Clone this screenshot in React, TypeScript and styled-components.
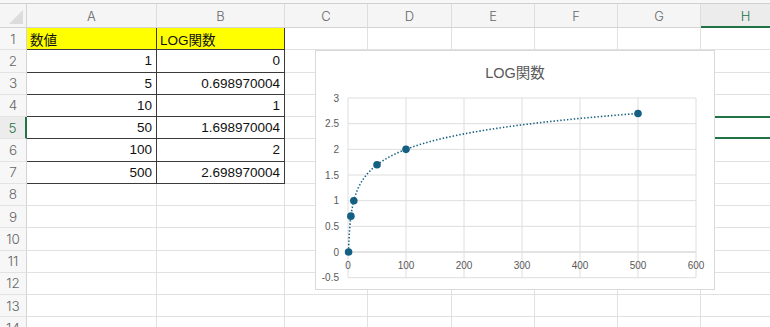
import { createGlobalStyle, styled } from "styled-components";

const GlobalStyle = createGlobalStyle`
  html, body {
    margin: 0;
    padding: 0;
    background: #ffffff;
  }
  body {
    font-family: "Liberation Sans", "Noto Sans CJK JP", sans-serif;
  }
`;

const Sheet = styled.div`
  position: relative;
  width: 770px;
  height: 327px;
  overflow: hidden;
  background: #ffffff;
`;

const TopStrip = styled.div`
  height: 3px;
  border-bottom: 1px solid #d0d0d0;
  background: #f7f7f7;
`;

const Grid = styled.div`
  display: grid;
  grid-template-columns: 27px 130px 128px 83px 84px 83px 83px 83px 90px;
  grid-template-rows: 24px repeat(14, 22.25px);
`;

const Corner = styled.div`
  position: relative;
  background: #f5f5f5;
  border-right: 1px solid #d4d4d4;
  border-bottom: 1px solid #d4d4d4;
  box-sizing: border-box;
  &::after {
    content: "";
    position: absolute;
    right: 3px;
    bottom: 3px;
    border-style: solid;
    border-width: 0 0 14px 14px;
    border-color: transparent transparent #dcdcdc transparent;
  }
`;

const ColHeader = styled.div<{ $active?: boolean }>`
  display: flex;
  align-items: center;
  justify-content: center;
  box-sizing: border-box;
  background: ${(p) => (p.$active ? "#ececec" : "#f5f5f5")};
  border-right: 1px solid #dedede;
  border-bottom: ${(p) => (p.$active ? "2px solid #217346" : "1px solid #d4d4d4")};
  color: ${(p) => (p.$active ? "#217346" : "#666666")};
  font-family: "Inter", "Liberation Sans", sans-serif;
  font-size: 13px;
  font-weight: 300;
  padding-top: 1px;
`;

const RowHeader = styled.div<{ $active?: boolean }>`
  display: flex;
  align-items: center;
  justify-content: center;
  box-sizing: border-box;
  background: ${(p) => (p.$active ? "#ececec" : "#f7f7f7")};
  border-right: ${(p) => (p.$active ? "2px solid #217346" : "1px solid #d4d4d4")};
  border-bottom: 1px solid #e3e3e3;
  color: ${(p) => (p.$active ? "#217346" : "#666666")};
  font-family: "Inter", "Liberation Sans", sans-serif;
  font-size: 13.5px;
  font-weight: 300;
`;

const Cell = styled.div<{ $box?: boolean; $fill?: string; $left?: boolean; $sel?: boolean }>`
  display: flex;
  align-items: center;
  justify-content: ${(p) => (p.$left ? "flex-start" : "flex-end")};
  box-sizing: border-box;
  padding: 0 4px 0 3px;
  background: ${(p) => p.$fill ?? "#ffffff"};
  border-right: 1px solid ${(p) => (p.$box ? "#3a3a3a" : "#e1e1e1")};
  border-bottom: 1px solid ${(p) => (p.$box ? "#3a3a3a" : "#e1e1e1")};
  ${(p) => (p.$sel ? "border-top: 2px solid #217346; border-bottom: 2px solid #217346; margin-top: -1px;" : "")}
  color: #111111;
  font-size: 13.5px;
  white-space: nowrap;
`;

const ChartBox = styled.div`
  position: absolute;
  left: 315px;
  top: 50px;
  width: 400px;
  height: 240px;
  box-sizing: border-box;
  background: #ffffff;
  border: 1px solid #d9d9d9;
`;

const letters = ["A", "B", "C", "D", "E", "F", "G", "H"];

const data: [number, number][] = [
  [1, 0],
  [5, 0.698970004],
  [10, 1],
  [50, 1.698970004],
  [100, 2],
  [500, 2.698970004],
];

const tableText: [string, string][] = [
  ["1", "0"],
  ["5", "0.698970004"],
  ["10", "1"],
  ["50", "1.698970004"],
  ["100", "2"],
  ["500", "2.698970004"],
];

const X = (v: number) => 32 + v * 0.58;
const Y = (v: number) => 47 + (3 - v) * 51.34;

const LogChart = () => {
  const yTicks = [3, 2.5, 2, 1.5, 1, 0.5, 0, -0.5];
  const xTicks = [0, 100, 200, 300, 400, 500, 600];
  const pts: string[] = [];
  for (let i = 0; i <= 400; i++) {
    const x = Math.pow(500, i / 400);
    pts.push(`${X(x).toFixed(2)},${Y(Math.log10(x)).toFixed(2)}`);
  }
  return (
    <ChartBox>
      <svg width="398" height="238" viewBox="0 0 398 238">
        <text
          x="199"
          y="27"
          textAnchor="middle"
          fontSize="14.5"
          fill="#595959"
          fontFamily='"Liberation Sans", "Noto Sans CJK JP", sans-serif'
        >
          LOG関数
        </text>
        {yTicks.map((t) => (
          <g key={t}>
            <line x1={X(0)} x2={X(600)} y1={Y(t)} y2={Y(t)} stroke={t === 0 ? "#c8c8c8" : "#dedede"} strokeWidth="1" />
            <text x="23" y={Y(t) + 3.5} textAnchor="end" fontSize="10" fill="#595959" fontFamily='"Liberation Sans", sans-serif'>
              {t}
            </text>
          </g>
        ))}
        {xTicks.map((t) => (
          <g key={t}>
            <line x1={X(t)} x2={X(t)} y1={Y(3)} y2={Y(-0.5)} stroke="#dedede" strokeWidth="1" />
            <text x={X(t)} y={Y(0) + 17} textAnchor="middle" fontSize="10" fill="#595959" fontFamily='"Liberation Sans", sans-serif'>
              {t}
            </text>
          </g>
        ))}
        <polyline
          points={pts.join(" ")}
          fill="none"
          stroke="#156082"
          strokeWidth="1.6"
          strokeDasharray="1.4 2"
        />
        {data.map(([x, y]) => (
          <circle key={x} cx={X(x)} cy={Y(y)} r="3.8" fill="#156082" />
        ))}
      </svg>
    </ChartBox>
  );
};

const App = () => {
  const rows = Array.from({ length: 14 }, (_, i) => i + 1);
  return (
    <Sheet>
      <GlobalStyle />
      <TopStrip />
      <Grid>
        <Corner />
        {letters.map((l) => (
          <ColHeader key={l} $active={l === "H"}>
            {l}
          </ColHeader>
        ))}
        {rows.map((r) => {
          const inTable = r <= 7;
          const head = r === 1;
          const vals = r >= 2 && r <= 7 ? tableText[r - 2] : null;
          return [
            <RowHeader key={`h${r}`} $active={r === 5}>
              {r}
            </RowHeader>,
            <Cell key={`a${r}`} $box={inTable} $fill={head ? "#ffff00" : undefined} $left={head}>
              {head ? "数値" : vals?.[0]}
            </Cell>,
            <Cell key={`b${r}`} $box={inTable} $fill={head ? "#ffff00" : undefined} $left={head}>
              {head ? "LOG関数" : vals?.[1]}
            </Cell>,
            ...["c", "d", "e", "f", "g", "h"].map((c) => (
              <Cell key={`${c}${r}`} $sel={c === "h" && r === 5} />
            )),
          ];
        })}
      </Grid>
      <LogChart />
    </Sheet>
  );
};

export default App;
